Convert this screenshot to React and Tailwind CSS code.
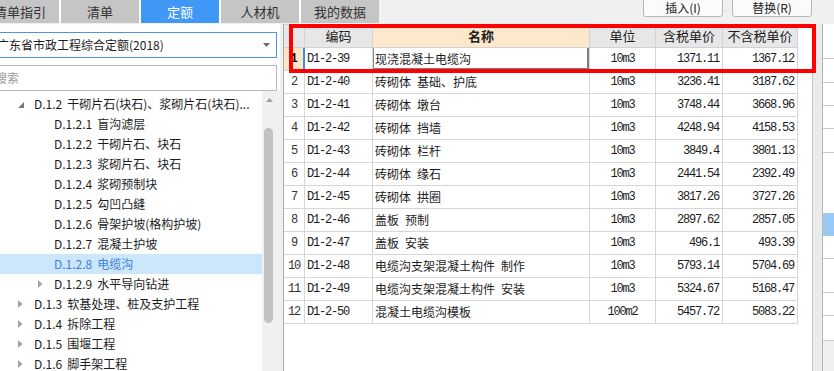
import React from "react";

const TABS = [
  { t: "清单指引" },
  { t: "清单" },
  { t: "定额", active: true },
  { t: "人材机" },
  { t: "我的数据" },
];

const TREE = [
  { lvl: 1, exp: "open", text: "D.1.2 干砌片石(块石)、浆砌片石(块石)..." },
  { lvl: 2, text: "D.1.2.1 盲沟滤层" },
  { lvl: 2, text: "D.1.2.2 干砌片石、块石" },
  { lvl: 2, text: "D.1.2.3 浆砌片石、块石" },
  { lvl: 2, text: "D.1.2.4 浆砌预制块" },
  { lvl: 2, text: "D.1.2.5 勾凹凸缝" },
  { lvl: 2, text: "D.1.2.6 骨架护坡(格构护坡)" },
  { lvl: 2, text: "D.1.2.7 混凝土护坡" },
  { lvl: 2, text: "D.1.2.8 电缆沟", sel: true },
  { lvl: 2, exp: "closed", text: "D.1.2.9 水平导向钻进" },
  { lvl: 1, exp: "closed", text: "D.1.3 软基处理、桩及支护工程" },
  { lvl: 1, exp: "closed", text: "D.1.4 拆除工程" },
  { lvl: 1, exp: "closed", text: "D.1.5 围堰工程" },
  { lvl: 1, exp: "closed", text: "D.1.6 脚手架工程" },
];

const ROWS = [
  ["D1-2-39", "现浇混凝土电缆沟", "10m3", "1371.11", "1367.12"],
  ["D1-2-40", "砖砌体 基础、护底", "10m3", "3236.41", "3187.62"],
  ["D1-2-41", "砖砌体 墩台", "10m3", "3748.44", "3668.96"],
  ["D1-2-42", "砖砌体 挡墙", "10m3", "4248.94", "4158.53"],
  ["D1-2-43", "砖砌体 栏杆", "10m3", "3849.4", "3801.13"],
  ["D1-2-44", "砖砌体 缘石", "10m3", "2441.54", "2392.49"],
  ["D1-2-45", "砖砌体 拱圈", "10m3", "3817.26", "3727.26"],
  ["D1-2-46", "盖板 预制", "10m3", "2897.62", "2857.05"],
  ["D1-2-47", "盖板 安装", "10m3", "496.1", "493.39"],
  ["D1-2-48", "电缆沟支架混凝土构件 制作", "10m3", "5793.14", "5704.69"],
  ["D1-2-49", "电缆沟支架混凝土构件 安装", "10m3", "5324.67", "5168.47"],
  ["D1-2-50", "混凝土电缆沟模板", "100m2", "5457.72", "5083.22"],
];

const GRID = "grid grid-cols-[21px_68px_217px_66px_67px_75px] w-[514px]";
const MONO = "font-['Liberation_Mono',monospace] text-[12px] tracking-[-1.2px]";

function Tri({ exp }) {
  if (exp === "open")
    return (
      <svg width="6" height="6" viewBox="0 0 6 6" className="ml-[1px] mt-[1px]">
        <polygon points="6,0 6,6 0,6" fill="#7a7a7a" />
      </svg>
    );
  if (exp === "closed")
    return (
      <svg width="5" height="8" viewBox="0 0 5 8" className="ml-[1px]">
        <polygon points="0,0 4.5,4 0,8" fill="#a3a3a3" />
      </svg>
    );
  return null;
}

function TreeLabel({ text }) {
  const idx = text.indexOf(" ");
  return (
    <span>
      {text.slice(0, idx)}
      <span className="inline-block w-[5px]" />
      {text.slice(idx + 1)}
    </span>
  );
}

export default function App() {
  return (
    <div className="relative w-[834px] h-[371px] overflow-hidden bg-white flex flex-col font-['Noto_Sans_CJK_SC',sans-serif] text-[#1c1c1c]">
      {/* top bar */}
      <div className="flex h-[24px] shrink-0 bg-[#f0f0f0]">
        <div className="flex gap-[2px] h-[23px] bg-white ml-[-19px]">
          {TABS.map((tab) => (
            <div
              key={tab.t}
              className={
                "w-[78px] h-[23px] flex items-center justify-center text-[13px] leading-none " +
                (tab.active ? "bg-[#4098f6] text-white" : "bg-[#c5c5c5] text-[#333]")
              }
            >
              {tab.t}
            </div>
          ))}
        </div>
        <div className="flex-1 flex justify-end items-start gap-[9px] pr-[22px]">
          <div className="w-[80px] h-[21px] mt-[-4px] pt-[2px] border border-[#b8b8b8] rounded-b-[3px] bg-[#fbfbfb] flex items-center justify-center text-[12px] leading-none text-[#222]">
            插入(I)
          </div>
          <div className="w-[80px] h-[21px] mt-[-4px] pt-[2px] border border-[#b8b8b8] rounded-b-[3px] bg-[#fbfbfb] flex items-center justify-center text-[12px] leading-none text-[#222]">
            替换(R)
          </div>
        </div>
      </div>

      {/* body */}
      <div className="flex flex-1 min-h-0">
        {/* left panel */}
        <div className="w-[280px] shrink-0 flex flex-col bg-white">
          <div className="mt-[8px] ml-[-8px] w-[285px] h-[26px] border border-[#4d95e2] flex items-center justify-between pl-[4px] pr-[6px] text-[12px] leading-none">
            <span>广东省市政工程综合定额(2018)</span>
            <svg width="7" height="4" viewBox="0 0 7 4">
              <polygon points="0,0 7,0 3.5,4" fill="#6b6b6b" />
            </svg>
          </div>
          <div className="mt-[7px] ml-[-8px] w-[285px] h-[26px] border border-[#b9b9b9] flex items-center pl-[2px] text-[12px] leading-none text-[#9b9b9b]">
            搜索
          </div>
          <div className="flex flex-1 min-h-0 overflow-hidden">
            <div className="w-[262px] pt-[3px] flex flex-col">
              {TREE.map((n) => (
                <div
                  key={n.text}
                  className={
                    "h-[20px] shrink-0 flex items-center text-[12px] leading-none whitespace-nowrap " +
                    (n.lvl === 1 ? "pl-[17px] " : "pl-[37px] ") +
                    (n.sel ? "bg-[#cce6fb] text-[#3b82d6]" : "")
                  }
                >
                  <div className="w-[17px] h-[20px] flex items-center">
                    <Tri exp={n.exp} />
                  </div>
                  <TreeLabel text={n.text} />
                </div>
              ))}
            </div>
            <div className="w-[18px] bg-[#f0f0f0] flex flex-col items-start">
              <svg width="7" height="4" viewBox="0 0 7 4" className="ml-[4px] mt-[7px]">
                <polygon points="3.5,0 7,4 0,4" fill="#a0a0a0" />
              </svg>
              <div className="ml-[2px] mt-[26px] w-[9px] h-[195px] rounded-full bg-[#c2c2c2]" />
            </div>
          </div>
        </div>

        {/* right panel */}
        <div className="flex-1 flex bg-[#f0f0f0] pl-[3px]">
          <div className="w-[530px] bg-white border-l border-r border-l-[#a9a9a9] border-r-[#c4c4c4] flex flex-col">
            {/* header */}
            <div className={GRID + " h-[24px] border-t border-b border-[#d2d2d2] text-[13px] leading-[22px]"}>
              <div className="bg-[#e7e7e7] border-r border-[#d2d2d2]" />
              <div className="bg-[#e7e7e7] border-r border-[#d2d2d2] text-center">编码</div>
              <div className="bg-[#fde8cc] border-r border-[#d2d2d2] text-center font-bold">名称</div>
              <div className="bg-[#e7e7e7] border-r border-[#d2d2d2] text-center">单位</div>
              <div className="bg-[#e7e7e7] border-r border-[#d2d2d2] text-center">含税单价</div>
              <div className="bg-[#e7e7e7] border-r border-[#d2d2d2] text-center">不含税单价</div>
            </div>
            {ROWS.map((r, i) => {
              const first = i === 0;
              return (
                <div key={r[0]} className={GRID + " h-[23px] border-b border-[#d6d6d6]"}>
                  <div
                    className={
                      MONO +
                      " flex items-center justify-center text-[#333] " +
                      (first
                        ? "bg-[#fde5c8] border-r-2 border-[#3d8ee8] font-bold text-black"
                        : "border-r border-[#d6d6d6]")
                    }
                  >
                    {i + 1}
                  </div>
                  <div className={MONO + " flex items-center pl-[2px] border-r border-[#d6d6d6]"}>{r[0]}</div>
                  <div
                    className={
                      "flex items-center pl-[2px] text-[12px] leading-none whitespace-nowrap border-r border-[#d6d6d6] " +
                      (first ? "shadow-[inset_1px_0_0_#8a8a8a,inset_-2px_-2px_0_#7f7f7f]" : "")
                    }
                  >
                    {r[1].replace(/ /g, "\u2002")}
                  </div>
                  <div className={MONO + " flex items-center justify-center border-r border-[#d6d6d6]"}>{r[2]}</div>
                  <div className={MONO + " flex items-center justify-end pr-[3px] border-r border-[#d6d6d6]"}>{r[3]}</div>
                  <div className={MONO + " flex items-center justify-end pr-[3px] border-r border-[#d6d6d6]"}>{r[4]}</div>
                </div>
              );
            })}
          </div>
          <div className="w-[9px] bg-[#ebebeb]" />
          <div className="flex-1 border-l border-[#b5b5b5] bg-white flex flex-col">
            <div className="h-[34px] shrink-0" />
            <div className="h-[24px] shrink-0 border-t border-[#c8c8c8]" />
            <div className="h-[23px] shrink-0 border-t border-[#c8c8c8]" />
            <div className="h-[23px] shrink-0 border-t border-[#c8c8c8]" />
            <div className="h-[24px] shrink-0 border-t border-[#c8c8c8]" />
            <div className="h-[61px] shrink-0 border-t border-[#c8c8c8]" />
            <div className="h-[23px] shrink-0 bg-[#99c9f5]" />
            <div className="h-[22px] shrink-0" />
            <div className="h-[34px] shrink-0 border-t border-[#c8c8c8]" />
            <div className="h-[23px] shrink-0 border-t border-[#c8c8c8]" />
            <div className="h-[25px] shrink-0 border-t border-[#c8c8c8]" />
            <div className="flex-1 border-t border-[#c8c8c8] bg-[#f0f0f0]" />
          </div>
        </div>
      </div>

      {/* red annotation box */}
      <div className="absolute left-[289px] top-[24px] w-[527px] h-[49px] border-4 border-[#ff0000] pointer-events-none" />
    </div>
  );
}
